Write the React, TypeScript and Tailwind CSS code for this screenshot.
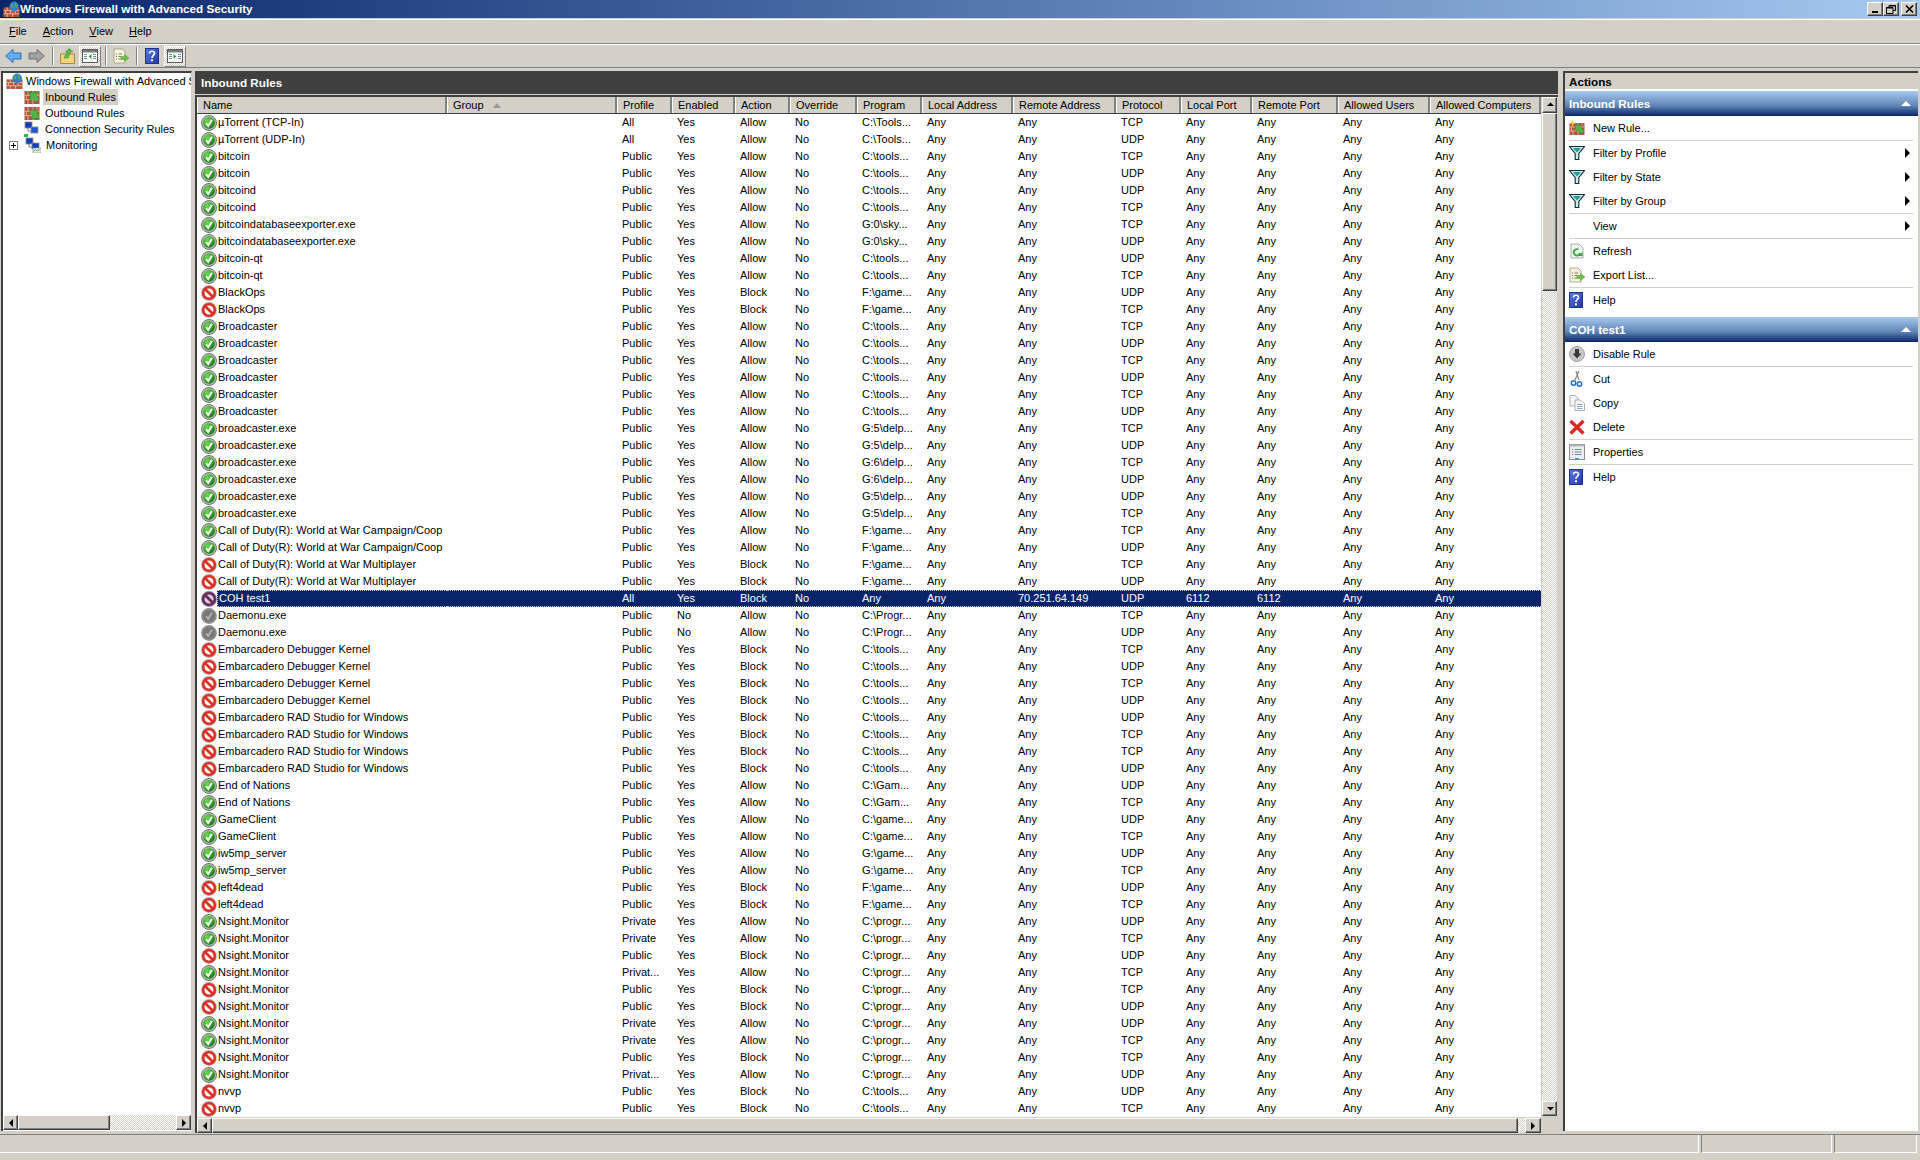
import React from 'react'

type Kind = 'allow' | 'block' | 'off'
type Row = { name: string; profile: string; enabled?: string; action: string; program: string; proto: string; kind: Kind }

const T = 'C:\\tools...'
const rule = (name: string, profile: string, action: string, program: string, proto: string, enabled = 'Yes'): Row => ({
  name, profile, action, program, proto, enabled,
  kind: enabled === 'No' ? 'off' : action === 'Block' ? 'block' : 'allow',
})

const rows: Row[] = [
  rule('µTorrent (TCP-In)', 'All', 'Allow', 'C:\\Tools...', 'TCP'),
  rule('µTorrent (UDP-In)', 'All', 'Allow', 'C:\\Tools...', 'UDP'),
  rule('bitcoin', 'Public', 'Allow', T, 'TCP'),
  rule('bitcoin', 'Public', 'Allow', T, 'UDP'),
  rule('bitcoind', 'Public', 'Allow', T, 'UDP'),
  rule('bitcoind', 'Public', 'Allow', T, 'TCP'),
  rule('bitcoindatabaseexporter.exe', 'Public', 'Allow', 'G:0\\sky...', 'TCP'),
  rule('bitcoindatabaseexporter.exe', 'Public', 'Allow', 'G:0\\sky...', 'UDP'),
  rule('bitcoin-qt', 'Public', 'Allow', T, 'UDP'),
  rule('bitcoin-qt', 'Public', 'Allow', T, 'TCP'),
  rule('BlackOps', 'Public', 'Block', 'F:\\game...', 'UDP'),
  rule('BlackOps', 'Public', 'Block', 'F:\\game...', 'TCP'),
  rule('Broadcaster', 'Public', 'Allow', T, 'TCP'),
  rule('Broadcaster', 'Public', 'Allow', T, 'UDP'),
  rule('Broadcaster', 'Public', 'Allow', T, 'TCP'),
  rule('Broadcaster', 'Public', 'Allow', T, 'UDP'),
  rule('Broadcaster', 'Public', 'Allow', T, 'TCP'),
  rule('Broadcaster', 'Public', 'Allow', T, 'UDP'),
  rule('broadcaster.exe', 'Public', 'Allow', 'G:5\\delp...', 'TCP'),
  rule('broadcaster.exe', 'Public', 'Allow', 'G:5\\delp...', 'UDP'),
  rule('broadcaster.exe', 'Public', 'Allow', 'G:6\\delp...', 'TCP'),
  rule('broadcaster.exe', 'Public', 'Allow', 'G:6\\delp...', 'UDP'),
  rule('broadcaster.exe', 'Public', 'Allow', 'G:5\\delp...', 'UDP'),
  rule('broadcaster.exe', 'Public', 'Allow', 'G:5\\delp...', 'TCP'),
  rule('Call of Duty(R): World at War Campaign/Coop', 'Public', 'Allow', 'F:\\game...', 'TCP'),
  rule('Call of Duty(R): World at War Campaign/Coop', 'Public', 'Allow', 'F:\\game...', 'UDP'),
  rule('Call of Duty(R): World at War Multiplayer', 'Public', 'Block', 'F:\\game...', 'TCP'),
  rule('Call of Duty(R): World at War Multiplayer', 'Public', 'Block', 'F:\\game...', 'UDP'),
  rule('COH test1', 'All', 'Block', 'Any', 'UDP'),
  rule('Daemonu.exe', 'Public', 'Allow', 'C:\\Progr...', 'TCP', 'No'),
  rule('Daemonu.exe', 'Public', 'Allow', 'C:\\Progr...', 'UDP', 'No'),
  rule('Embarcadero Debugger Kernel', 'Public', 'Block', T, 'TCP'),
  rule('Embarcadero Debugger Kernel', 'Public', 'Block', T, 'UDP'),
  rule('Embarcadero Debugger Kernel', 'Public', 'Block', T, 'TCP'),
  rule('Embarcadero Debugger Kernel', 'Public', 'Block', T, 'UDP'),
  rule('Embarcadero RAD Studio for Windows', 'Public', 'Block', T, 'UDP'),
  rule('Embarcadero RAD Studio for Windows', 'Public', 'Block', T, 'TCP'),
  rule('Embarcadero RAD Studio for Windows', 'Public', 'Block', T, 'TCP'),
  rule('Embarcadero RAD Studio for Windows', 'Public', 'Block', T, 'UDP'),
  rule('End of Nations', 'Public', 'Allow', 'C:\\Gam...', 'UDP'),
  rule('End of Nations', 'Public', 'Allow', 'C:\\Gam...', 'TCP'),
  rule('GameClient', 'Public', 'Allow', 'C:\\game...', 'UDP'),
  rule('GameClient', 'Public', 'Allow', 'C:\\game...', 'TCP'),
  rule('iw5mp_server', 'Public', 'Allow', 'G:\\game...', 'UDP'),
  rule('iw5mp_server', 'Public', 'Allow', 'G:\\game...', 'TCP'),
  rule('left4dead', 'Public', 'Block', 'F:\\game...', 'UDP'),
  rule('left4dead', 'Public', 'Block', 'F:\\game...', 'TCP'),
  rule('Nsight.Monitor', 'Private', 'Allow', 'C:\\progr...', 'UDP'),
  rule('Nsight.Monitor', 'Private', 'Allow', 'C:\\progr...', 'TCP'),
  rule('Nsight.Monitor', 'Public', 'Block', 'C:\\progr...', 'UDP'),
  rule('Nsight.Monitor', 'Privat...', 'Allow', 'C:\\progr...', 'TCP'),
  rule('Nsight.Monitor', 'Public', 'Block', 'C:\\progr...', 'TCP'),
  rule('Nsight.Monitor', 'Public', 'Block', 'C:\\progr...', 'UDP'),
  rule('Nsight.Monitor', 'Private', 'Allow', 'C:\\progr...', 'UDP'),
  rule('Nsight.Monitor', 'Private', 'Allow', 'C:\\progr...', 'TCP'),
  rule('Nsight.Monitor', 'Public', 'Block', 'C:\\progr...', 'TCP'),
  rule('Nsight.Monitor', 'Privat...', 'Allow', 'C:\\progr...', 'UDP'),
  rule('nvvp', 'Public', 'Block', T, 'UDP'),
  rule('nvvp', 'Public', 'Block', T, 'TCP'),
]

const columns = [
  { label: 'Name', w: 'w-[250px]' },
  { label: 'Group', w: 'w-[170px]' },
  { label: 'Profile', w: 'w-[55px]' },
  { label: 'Enabled', w: 'w-[63px]' },
  { label: 'Action', w: 'w-[55px]' },
  { label: 'Override', w: 'w-[67px]' },
  { label: 'Program', w: 'w-[65px]' },
  { label: 'Local Address', w: 'w-[91px]' },
  { label: 'Remote Address', w: 'w-[103px]' },
  { label: 'Protocol', w: 'w-[65px]' },
  { label: 'Local Port', w: 'w-[71px]' },
  { label: 'Remote Port', w: 'w-[86px]' },
  { label: 'Allowed Users', w: 'w-[92px]' },
  { label: 'Allowed Computers', w: 'w-[111px]' },
]

const bevel = 'border border-t-white border-l-white border-r-[#404040] border-b-[#404040] shadow-[inset_-1px_-1px_#808080] bg-[#d4d0c8]'
const hatch = 'bg-[repeating-conic-gradient(#ffffff_0_25%,#d4d0c8_0_50%)] bg-[length:2px_2px]'

// status icon in front of each rule
const RuleIcon = ({ kind, selected }: { kind: Kind; selected?: boolean }) => {
  if (kind === 'block') {
    const red = selected ? '#6b2a5e' : '#dc2f26'
    return (
      <svg width="16" height="16" viewBox="0 0 16 16" className="shrink-0">
        <circle cx="8" cy="8" r="7.9" fill={selected ? '#8a8a9a' : '#b0b0b0'} />
        <circle cx="8" cy="8" r="5.8" fill={selected ? '#d8d0dc' : '#ffffff'} stroke={red} strokeWidth="2.6" />
        <path d="M4 4 L12 12" stroke={red} strokeWidth="2.6" />
      </svg>
    )
  }
  if (kind === 'off') {
    return (
      <svg width="16" height="16" viewBox="0 0 16 16" className="shrink-0">
        <circle cx="8" cy="8" r="7.9" fill="#8e8e8e" />
        <circle cx="8" cy="8" r="6" fill="#777777" />
        <path d="M5 8.2 L7.2 11 L11 4.8" stroke="#b4b4b4" strokeWidth="1.8" fill="none" />
      </svg>
    )
  }
  return (
    <svg width="16" height="16" viewBox="0 0 16 16" className="shrink-0">
      <circle cx="8" cy="8" r="7.5" fill="#b4b8b4" stroke="#6f776f" strokeWidth="1" />
      <circle cx="8" cy="8" r="5.8" fill="url(#allowGreen)" />
      <path d="M5 8.2 L7.2 11 L11 4.8" stroke="#ffffff" strokeWidth="2" fill="none" />
    </svg>
  )
}

const Bricks = ({ top = 6 }: { top?: number }) => {
  const a = top + (15 - top) / 3
  const b = top + (2 * (15 - top)) / 3
  return (
    <>
      <rect x="0.5" y={top} width="15" height={15 - top} fill="#b4523c" />
      <path
        d={`M0.5 ${a}H15.5M0.5 ${b}H15.5M4 ${top}V${a}M9 ${top}V${a}M13 ${top}V${a}M2.5 ${a}V${b}M7 ${a}V${b}M11.5 ${a}V${b}M4 ${b}V15M9 ${b}V15`}
        stroke="#e2c4b0"
        strokeWidth="0.8"
      />
    </>
  )
}

const FirewallIcon = () => (
  <svg width="17" height="17" viewBox="0 0 16 16" className="shrink-0">
    <Bricks />
    <circle cx="10.5" cy="5" r="4.5" fill="#2f7fd8" />
    <path d="M8 2.5 C10 3 10 5 8.5 6.5 L7 5 Z M11 1 C13 2 14 4 13 6 L11 5 Z" fill="#4caf3a" />
  </svg>
)

const WallArrow = ({ out }: { out?: boolean }) => (
  <svg width="16" height="16" viewBox="0 0 16 16" className="shrink-0">
    <Bricks top={2} />
    {out ? (
      <path d="M8 3 L11 5.5 L13 3.5 L15 12.5 L6.5 12.5 L9 10 L5.5 6.5 Z" fill="#4cb848" stroke="#2b8a2b" strokeWidth="0.5" transform="translate(0 1)" />
    ) : (
      <path d="M6 3.5 L14 3.5 L11.7 6 L15.5 10 L12 13.5 L8.5 9.5 L6 12 Z" fill="#4cb848" stroke="#2b8a2b" strokeWidth="0.5" />
    )}
  </svg>
)

const PcIcon = ({ graph }: { graph?: boolean }) => (
  <svg width="16" height="16" viewBox="0 0 16 16" className="shrink-0">
    <rect x="1" y="1" width="7" height="6" fill="#123fb8" stroke="#8c8c8c" strokeWidth="0.8" />
    <rect x="7" y="6" width="7" height="6" fill={graph ? '#123fb8' : '#1f56d8'} stroke="#8c8c8c" strokeWidth="0.8" />
    {graph ? (
      <>
        <rect x="8" y="11" width="8" height="5" fill="#e8efe8" stroke="#8c8c8c" strokeWidth="0.6" />
        <path d="M8.5 14.5 L10.5 12.5 L12 14 L15 12.5" stroke="#3aa03a" strokeWidth="0.8" fill="none" />
      </>
    ) : (
      <rect x="0" y="13" width="4" height="3" fill="#36b04a" />
    )}
    <path d="M4 7V10H7" stroke="#666666" strokeWidth="0.8" fill="none" />
  </svg>
)

const HelpIcon = ({ size = 14 }: { size?: number }) => (
  <svg width={size} height="16" viewBox="0 0 14 16" className="shrink-0">
    <rect x="0.5" y="0.5" width="13" height="15" fill="url(#helpBlue)" stroke="#20308f" />
    <path d="M4.5 5.5 C4.5 2.5 9.5 2.5 9.5 5.5 C9.5 7.5 7 7.5 7 10" stroke="#ffffff" strokeWidth="1.7" fill="none" />
    <rect x="6" y="11.3" width="2" height="2" fill="#ffffff" />
  </svg>
)

const ExportIcon = () => (
  <svg width="16" height="16" viewBox="0 0 16 16" className="shrink-0">
    <path d="M1 1H9L12 4V15H1Z" fill="#f8f4d8" stroke="#9a9a80" strokeWidth="0.8" />
    <path d="M3 6H4M5.5 6H9M3 8.5H4M5.5 8.5H8M3 11H4M5.5 11H8" stroke="#555555" strokeWidth="0.8" />
    <path d="M8 8.5H11.5V6.5L16 10L11.5 13.5V11.5H8Z" fill="#6cc04a" stroke="#3f8f2f" strokeWidth="0.4" />
  </svg>
)

const Funnel = () => (
  <svg width="16" height="16" viewBox="0 0 16 16" className="shrink-0">
    <path d="M0.5 1.5H15.5L9.8 8.5V14.5H6.2V8.5Z" fill="#cfeeee" stroke="#0a2a2a" strokeWidth="1.1" />
    <path d="M4 3H12L8 7.5Z" fill="#1f9a9a" />
  </svg>
)

const NewRuleIcon = () => (
  <svg width="16" height="16" viewBox="0 0 16 16" className="shrink-0">
    <Bricks top={3} />
    <path d="M6 5 L13 5 L11.7 7 L15 11 L12 14 L9 10 L7 11.5 Z" fill="#4cb848" stroke="#2b8a2b" strokeWidth="0.5" />
    <path d="M3.5 0 L4.3 2.5 L7 3.2 L4.3 4 L3.5 6.5 L2.7 4 L0 3.2 L2.7 2.5 Z" fill="#f5c518" />
  </svg>
)

const RefreshIcon = () => (
  <svg width="16" height="16" viewBox="0 0 16 16" className="shrink-0">
    <path d="M2 1H10L14 5V15H2Z" fill="#f4f4f4" stroke="#9a9a9a" strokeWidth="0.8" />
    <path d="M11 10 A3.2 3.2 0 1 1 9.5 6.6" stroke="#35a93a" strokeWidth="1.8" fill="none" />
    <path d="M9 13 L13.5 13 L13.5 9 Z" fill="#35a93a" />
  </svg>
)

const DisableIcon = () => (
  <svg width="16" height="16" viewBox="0 0 16 16" className="shrink-0">
    <circle cx="8" cy="8" r="7.5" fill="#c8c8c8" stroke="#a0a0a0" />
    <path d="M6 3H10V7.5H12.5L8 12.5L3.5 7.5H6Z" fill="#3a3a3a" />
  </svg>
)

const CutIcon = () => (
  <svg width="16" height="16" viewBox="0 0 16 16" className="shrink-0">
    <path d="M10 0 L6 9 M7 0 L10 9" stroke="#8a8a8a" strokeWidth="1.3" />
    <circle cx="4.5" cy="12" r="2.2" fill="none" stroke="#1c6fd0" strokeWidth="1.5" />
    <circle cx="10.5" cy="13" r="2.2" fill="none" stroke="#1c6fd0" strokeWidth="1.5" />
  </svg>
)

const CopyIcon = () => (
  <svg width="16" height="16" viewBox="0 0 16 16" className="shrink-0">
    <path d="M1 0.5H6L9 3V11H1Z" fill="#f5f5f5" stroke="#9a9a9a" strokeWidth="0.8" />
    <path d="M6 5H11L15.5 8.5V15.5H6Z" fill="#ffffff" stroke="#9a9a9a" strokeWidth="0.8" />
    <path d="M8 9.5H13.5M8 11.5H13.5M8 13.5H13.5" stroke="#6b8fc0" strokeWidth="0.8" />
  </svg>
)

const DeleteIcon = () => (
  <svg width="16" height="16" viewBox="0 0 16 16" className="shrink-0">
    <path d="M1.5 2 L14.5 14.5 M14.5 2 L1.5 14.5" stroke="#d9291f" strokeWidth="3.4" />
  </svg>
)

const PropertiesIcon = () => (
  <svg width="16" height="16" viewBox="0 0 16 16" className="shrink-0">
    <rect x="0.5" y="0.5" width="15" height="15" fill="#eeeeee" stroke="#8a8a8a" />
    <rect x="0.5" y="0.5" width="15" height="2" fill="#b8b8b8" />
    <path d="M3 5.5H4M5.5 5.5H12.5M3 8H4M5.5 8H12.5M3 10.5H4M5.5 10.5H12.5" stroke="#4f6f9f" strokeWidth="0.8" />
    <rect x="6" y="14" width="4" height="1.5" fill="#2aa0d8" />
  </svg>
)

const PaneToggle = ({ right }: { right?: boolean }) => (
  <span className={`flex w-[22px] h-[21px] items-center justify-center border border-t-white border-l-white border-r-[#808080] border-b-[#808080] ${hatch}`}>
    <svg width="16" height="16" viewBox="0 0 16 16">
      <rect x="0.5" y="1.5" width="15" height="13" fill="#ffffff" stroke="#5a5a5a" />
      <rect x="1" y="2" width="14" height="2.5" fill="#7a7a7a" />
      <path d="M2 6.5H5M2 8.5H5M2 10.5H5M11 6.5H14M11 8.5H14M11 10.5H14" stroke="#6b8fa8" />
      {right ? <path d="M6.5 6 L9.5 8.5 L6.5 11 Z" fill="#2f9a3a" /> : <path d="M9.5 6 L6.5 8.5 L9.5 11 Z" fill="#2f9a3a" />}
    </svg>
  </span>
)

const ToolSep = () => <span className="w-[2px] h-[18px] border-l border-l-[#808080] border-r border-r-white" />

const NavArrow = ({ back, color, edge }: { back?: boolean; color: string; edge: string }) => (
  <svg width="17" height="16" viewBox="0 0 17 16" className="shrink-0">
    {back ? (
      <path d="M0.7 8 L8 1.5 V5 H16 V11 H8 V14.5 Z" fill={color} stroke={edge} />
    ) : (
      <path d="M16.3 8 L9 1.5 V5 H1 V11 H9 V14.5 Z" fill={color} stroke={edge} />
    )}
  </svg>
)

const FolderUp = () => (
  <svg width="15" height="16" viewBox="0 0 15 16" className="shrink-0">
    <path d="M0.5 6H14.5V15.5H0.5Z" fill="#f0d27a" stroke="#a98a3a" />
    <path d="M4 10 L7 4 L5.5 4 L9 0.5 L13 3.5 L10.5 4 L8 10Z" fill="#5cb84a" stroke="#3f8f2f" strokeWidth="0.5" />
  </svg>
)

const Triangle = ({ dir }: { dir: 'up' | 'down' | 'left' | 'right' }) => {
  const d = { up: 'M1 5L4.5 1.5L8 5Z', down: 'M1 2H8L4.5 5.5Z', left: 'M6 0V8L2 4Z', right: 'M2 0V8L6 4Z' }[dir]
  return (
    <svg width="8" height="8" viewBox="0 0 8 8">
      <path d={d} fill="#000000" />
    </svg>
  )
}

const ScrollBtn = ({ dir, className }: { dir: 'up' | 'down' | 'left' | 'right'; className: string }) => (
  <span className={`flex items-center justify-center shrink-0 ${bevel} ${className}`}>
    <Triangle dir={dir} />
  </span>
)

const ActionItem = ({ icon, label, sub }: { icon?: React.ReactNode; label: string; sub?: boolean }) => (
  <div className="flex h-6 items-center pl-[4px] pr-[8px]">
    <span className="flex w-[24px] shrink-0">{icon}</span>
    <span className="flex-1">{label}</span>
    {sub && (
      <svg width="5" height="10" viewBox="0 0 5 10">
        <path d="M0 0V10L5 5Z" fill="#000000" />
      </svg>
    )}
  </div>
)

const ActionSep = () => <div className="h-px ml-[4px] mr-[5px] bg-[#d4d0c8]" />

const ActionHead = ({ label }: { label: string }) => (
  <div className="flex h-[25px] items-center justify-between pl-[4px] pr-[7px] bg-gradient-to-b from-[#a6caf0] via-[#5f84b4] via-60% to-[#0a246a] text-[11.7px] font-bold text-white">
    <span>{label}</span>
    <svg width="10" height="5" viewBox="0 0 10 5">
      <path d="M0 5L5 0L10 5Z" fill="#ffffff" />
    </svg>
  </div>
)

export default function App() {
  return (
    <div className="flex flex-col w-[1920px] h-[1160px] overflow-hidden bg-[#d4d0c8] text-black text-[11px] leading-none font-['Liberation_Sans',sans-serif]">
      <svg width="0" height="0" className="absolute">
        <defs>
          <radialGradient id="allowGreen" cx="35%" cy="30%" r="75%">
            <stop offset="0%" stopColor="#6fdc4a" />
            <stop offset="100%" stopColor="#0d7a12" />
          </radialGradient>
          <linearGradient id="helpBlue" x1="0" y1="0" x2="1" y2="1">
            <stop offset="0%" stopColor="#5a78e0" />
            <stop offset="100%" stopColor="#2038a8" />
          </linearGradient>
        </defs>
      </svg>

      {/* title bar */}
      <div className="flex h-[18px] shrink-0 items-center justify-between pl-[3px] pr-[3px] bg-gradient-to-r from-[#0a246a] to-[#a6caf0]">
        <div className="flex items-center text-[11.7px] font-bold text-white">
          <FirewallIcon />
          <span>Windows Firewall with Advanced Security</span>
        </div>
        <div className="flex items-center">
          <span className={`flex items-end justify-center w-[16px] h-[14px] pb-[2px] ${bevel}`}>
            <span className="w-[6px] h-[2px] bg-black" />
          </span>
          <span className={`flex items-center justify-center w-[16px] h-[14px] ${bevel}`}>
            <svg width="10" height="9" viewBox="0 0 10 9">
              <path d="M3 2.5V0.5H9.5V5.5H7M0.5 2.5H7V8.5H0.5Z" fill="none" stroke="#000000" />
              <path d="M0 3H7M3 1H10" stroke="#000000" />
            </svg>
          </span>
          <span className={`flex items-center justify-center w-[16px] h-[14px] ml-[2px] ${bevel}`}>
            <svg width="9" height="8" viewBox="0 0 9 8">
              <path d="M1 0.5L8 7.5M8 0.5L1 7.5" stroke="#000000" strokeWidth="1.6" />
            </svg>
          </span>
        </div>
      </div>

      {/* menu */}
      <div className="h-px shrink-0" />
      <div className="flex h-[25px] shrink-0 items-center gap-[16px] pl-[9px] border-t border-t-white border-b border-b-[#808080]">
        <span><u>F</u>ile</span>
        <span><u>A</u>ction</span>
        <span><u>V</u>iew</span>
        <span><u>H</u>elp</span>
      </div>

      {/* toolbar */}
      <div className="flex h-[24px] shrink-0 items-center border-t border-t-white border-b border-b-[#808080] pl-[5px]">
        <NavArrow back color="#62b0f0" edge="#2a6fb8" />
        <span className="w-[6px]" />
        <NavArrow color="#a0a0a0" edge="#6e6e6e" />
        <span className="w-[7px]" />
        <ToolSep />
        <span className="w-[6px]" />
        <FolderUp />
        <span className="w-[4px]" />
        <PaneToggle />
        <span className="w-[4px]" />
        <ToolSep />
        <span className="w-[6px]" />
        <ExportIcon />
        <span className="w-[7px]" />
        <ToolSep />
        <span className="w-[7px]" />
        <HelpIcon />
        <span className="w-[5px]" />
        <PaneToggle right />
      </div>

      {/* panes */}
      <div className="flex h-[1066px] shrink-0 pt-[3px] pb-[3px] pl-px">
        {/* tree */}
        <div className="flex flex-col w-[191px] shrink-0 bg-white border-l-2 border-t-2 border-l-[#404040] border-t-[#404040] border-r border-r-[#d4d0c8]">
          <div className="flex-1 overflow-hidden">
            <div className="flex h-4 items-center pl-[3px] gap-[3px] whitespace-nowrap">
              <FirewallIcon />
              <span className="min-w-0 overflow-hidden">Windows Firewall with Advanced Security</span>
            </div>
            <div className="flex h-4 items-center pl-[21px] gap-[3px]">
              <WallArrow />
              <span className="flex h-4 items-center px-[2px] bg-[#d4d0c8]">Inbound Rules</span>
            </div>
            <div className="flex h-4 items-center pl-[21px] gap-[5px]">
              <WallArrow out />
              <span>Outbound Rules</span>
            </div>
            <div className="flex h-4 items-center pl-[21px] gap-[5px]">
              <PcIcon />
              <span>Connection Security Rules</span>
            </div>
            <div className="flex h-4 items-center pl-[6px] gap-[5px]">
              <span className="flex items-center justify-center w-[9px] h-[9px] mr-[2px] border border-[#808080] bg-white">
                <svg width="7" height="7" viewBox="0 0 7 7">
                  <path d="M1 3.5H6M3.5 1V6" stroke="#000000" />
                </svg>
              </span>
              <PcIcon graph />
              <span>Monitoring</span>
            </div>
          </div>
          <div className="flex h-[15px] shrink-0 mb-px">
            <ScrollBtn dir="left" className="w-[15px]" />
            <span className={`w-[92px] ${bevel}`} />
            <span className={`flex-1 ${hatch}`} />
            <ScrollBtn dir="right" className="w-[15px]" />
          </div>
        </div>

        <div className="w-[3px] shrink-0" />

        {/* center */}
        <div className="flex flex-col w-[1363px] shrink-0">
          <div className="flex h-[23px] shrink-0 items-center pl-[6px] bg-[#404040] text-[11.7px] font-bold text-white">Inbound Rules</div>
          <div className="h-px shrink-0" />
          <div className="flex flex-1 border-l-2 border-l-[#404040] border-t-2 border-t-[#404040]">
            <div className="flex flex-col w-[1344px] shrink-0">
              <div className="flex h-[17px] shrink-0 border-b border-b-[#404040]">
                {columns.map(c => (
                  <div key={c.label} className={`flex items-center gap-[9px] pl-[5px] pt-px shrink-0 overflow-hidden whitespace-nowrap border-l border-l-white border-r-2 border-r-[#808080] ${c.w}`}>
                    {c.label}
                    {c.label === 'Group' && (
                      <svg width="8" height="5" viewBox="0 0 8 5">
                        <path d="M0 5L4 0L8 5Z" fill="#9a9a9a" />
                      </svg>
                    )}
                  </div>
                ))}
              </div>
              <div className="bg-white">
                {rows.map((r, i) => {
                  const sel = r.name === 'COH test1'
                  const cells = sel
                    ? [r.profile, 'Yes', 'Block', 'No', 'Any', 'Any', '70.251.64.149', 'UDP', '6112', '6112', 'Any', 'Any']
                    : [r.profile, r.enabled, r.action, 'No', r.program, 'Any', 'Any', r.proto, 'Any', 'Any', 'Any', 'Any']
                  return (
                    <div key={i} className="flex h-[17px]">
                      <div className="flex w-[250px] shrink-0 items-center pl-[4px] whitespace-nowrap">
                        <RuleIcon kind={r.kind} selected={sel} />
                        <span className={`flex h-[17px] flex-1 items-center pl-px ${sel ? 'bg-[#0a246a] text-white border border-dotted border-[#d4d0c8] border-r-0' : ''}`}>{r.name}</span>
                      </div>
                      <div className={`flex flex-1 ${sel ? 'bg-[#0a246a] text-white border-y border-dotted border-y-[#d4d0c8]' : ''}`}>
                        <div className="w-[170px] shrink-0" />
                        {cells.map((c, j) => (
                          <div key={j} className={`flex items-center pl-[5px] shrink-0 ${columns[j + 2].w}`}>{c}</div>
                        ))}
                      </div>
                    </div>
                  )
                })}
              </div>
              <div className="flex h-[15px] shrink-0 mt-px">
                <ScrollBtn dir="left" className="w-[15px]" />
                <span className={`w-[1306px] ${bevel}`} />
                <span className={`flex-1 ${hatch}`} />
                <ScrollBtn dir="right" className="w-[16px]" />
              </div>
            </div>
            <div className="flex flex-col w-[16px] shrink-0 pl-px pb-[17px]">
              <ScrollBtn dir="up" className="h-[16px]" />
              <span className={`h-[178px] shrink-0 ${bevel}`} />
              <span className={`flex-1 ${hatch}`} />
              <ScrollBtn dir="down" className="h-[15px]" />
            </div>
          </div>
        </div>

        <div className="w-[5px] shrink-0" />

        {/* actions */}
        <div className="flex flex-col w-[355px] shrink-0 bg-white border-l-2 border-t-2 border-l-[#404040] border-t-[#404040]">
          <div className="flex h-[16px] shrink-0 items-center pl-[4px] pt-[2px] bg-[#d4d0c8] text-[11.7px] font-bold">Actions</div>
          <div className="h-[2px] shrink-0" />
          <ActionHead label="Inbound Rules" />
          <ActionItem icon={<NewRuleIcon />} label="New Rule..." />
          <ActionSep />
          <ActionItem icon={<Funnel />} label="Filter by Profile" sub />
          <ActionItem icon={<Funnel />} label="Filter by State" sub />
          <ActionItem icon={<Funnel />} label="Filter by Group" sub />
          <ActionSep />
          <ActionItem label="View" sub />
          <ActionSep />
          <ActionItem icon={<RefreshIcon />} label="Refresh" />
          <ActionItem icon={<ExportIcon />} label="Export List..." />
          <ActionSep />
          <ActionItem icon={<HelpIcon />} label="Help" />
          <div className="h-[5px] shrink-0" />
          <ActionHead label="COH test1" />
          <ActionItem icon={<DisableIcon />} label="Disable Rule" />
          <ActionSep />
          <ActionItem icon={<CutIcon />} label="Cut" />
          <ActionItem icon={<CopyIcon />} label="Copy" />
          <ActionItem icon={<DeleteIcon />} label="Delete" />
          <ActionSep />
          <ActionItem icon={<PropertiesIcon />} label="Properties" />
          <ActionSep />
          <ActionItem icon={<HelpIcon />} label="Help" />
        </div>
      </div>

      {/* status bar */}
      <div className="flex h-[19px] shrink-0 border-t border-t-[#808080] pr-[3px]">
        <div className="w-[1699px] shrink-0 border-r border-r-white border-b border-b-white" />
        <div className="w-[2px] shrink-0" />
        <div className="w-[131px] shrink-0 border-l border-l-[#808080] border-r border-r-white border-b border-b-white" />
        <div className="w-[2px] shrink-0" />
        <div className="flex-1 border-l border-l-[#808080] border-r border-r-white border-b border-b-white" />
      </div>
    </div>
  )
}
